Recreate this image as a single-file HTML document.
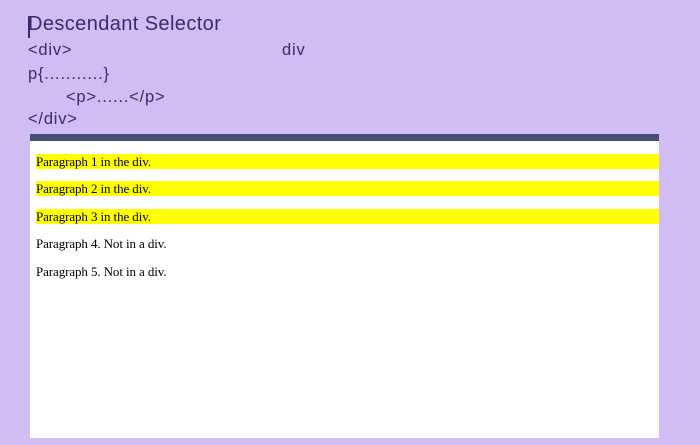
<!DOCTYPE html>
<html><head><style>
body{margin:0;width:700px;height:445px;background:#d1bcf3;position:relative;overflow:hidden;font-family:"Liberation Sans",sans-serif;color:#3b2c6c}
.t{position:absolute;white-space:nowrap}
.h{left:28px;top:13px;font-size:20px;letter-spacing:0.4px}
.c{font-size:16.5px;letter-spacing:0.8px}
#bar{position:absolute;left:30px;top:134px;width:629px;height:7px;background:#454f77}
#pan{position:absolute;left:30px;top:141px;width:629px;height:297px;background:#fff}
.p{position:absolute;left:6px;width:623px;height:15px;font-family:"Liberation Serif",serif;font-size:13px;letter-spacing:-0.1px;color:#000;line-height:15px}
.y{background:#ffff00}
#cur{position:absolute;left:28px;top:16px;width:2px;height:22px;background:#3b2c6c}
</style></head><body>
<div id="cur"></div>
<div class="t h">Descendant Selector</div>
<div class="t c" style="left:28px;top:41px">&lt;div&gt;</div>
<div class="t c" style="left:282px;top:41px">div</div>
<div class="t c" style="left:28px;top:65px">p{...........}</div>
<div class="t c" style="left:66px;top:88px">&lt;p&gt;......&lt;/p&gt;</div>
<div class="t c" style="left:28px;top:110px">&lt;/div&gt;</div>
<div id="bar"></div>
<div id="pan">
<div class="p y" style="top:13px">Paragraph 1 in the div.</div>
<div class="p y" style="top:40px">Paragraph 2 in the div.</div>
<div class="p y" style="top:68px">Paragraph 3 in the div.</div>
<div class="p" style="top:95px">Paragraph 4. Not in a div.</div>
<div class="p" style="top:123px">Paragraph 5. Not in a div.</div>
</div>
</body></html>
